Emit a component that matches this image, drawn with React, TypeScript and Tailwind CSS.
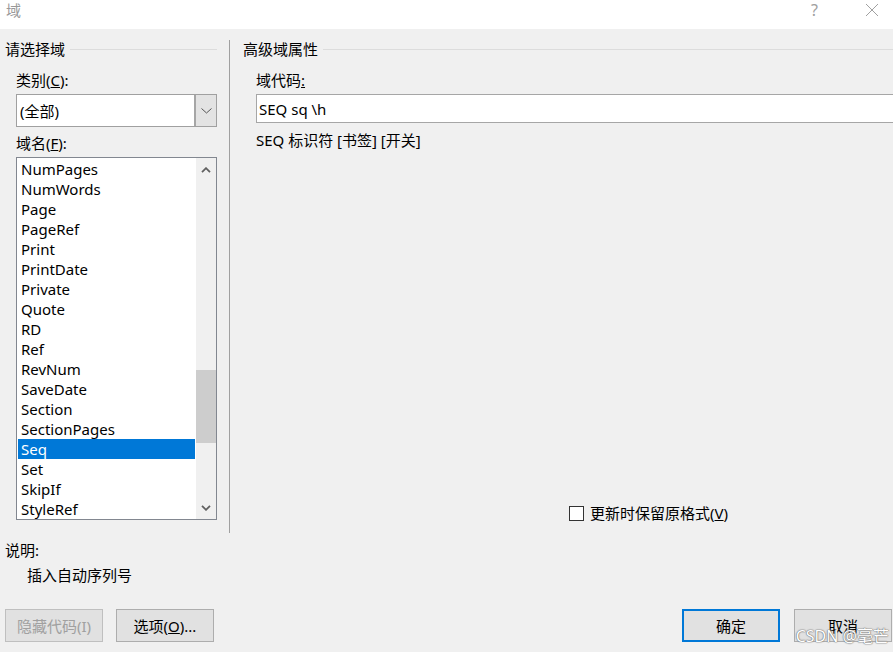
import type { JSX } from "react";

const FIELDS = [
  "NumPages",
  "NumWords",
  "Page",
  "PageRef",
  "Print",
  "PrintDate",
  "Private",
  "Quote",
  "RD",
  "Ref",
  "RevNum",
  "SaveDate",
  "Section",
  "SectionPages",
  "Seq",
  "Set",
  "SkipIf",
  "StyleRef",
];

function Chevron({ dir, className }: { dir: "up" | "down"; className?: string }): JSX.Element {
  return (
    <svg width="10" height="6" viewBox="0 0 10 6" className={className}>
      <path
        d={dir === "up" ? "M1 5.2 L5 1.2 L9 5.2" : "M1 0.8 L5 4.8 L9 0.8"}
        fill="none"
        stroke="#606060"
        strokeWidth="1.8"
      />
    </svg>
  );
}

function GroupHeader({ title }: { title: string }): JSX.Element {
  return (
    <div className="flex h-[20px] items-center">
      <span className="leading-[20px]">{title}</span>
      <div className="ml-[5px] h-px flex-1 bg-[#dcdcdc]" />
    </div>
  );
}

function Button({
  children,
  primary,
  disabled,
}: {
  children: React.ReactNode;
  primary?: boolean;
  disabled?: boolean;
}): JSX.Element {
  const border = primary
    ? "border-2 border-[#0078d7]"
    : disabled
      ? "border border-[#bfbfbf]"
      : "border border-[#adadad]";
  return (
    <div
      className={`flex h-[33px] w-[98px] items-center justify-center bg-[#e1e1e1] leading-[20px] ${border} ${
        disabled ? "text-[#a0a0a0]" : "text-black"
      }`}
    >
      {children}
    </div>
  );
}

export default function App(): JSX.Element {
  return (
    <div className="relative flex h-[652px] w-[893px] flex-col overflow-hidden bg-[#f0f0f0] font-['Noto_Sans','Noto_Sans_CJK_SC',sans-serif] text-[15px] text-black">
      {/* title bar */}
      <div className="flex h-[29px] shrink-0 items-start bg-white text-[#999999]">
        <span className="ml-[6px] leading-[20px]">域</span>
        <span className="ml-auto text-[16px] leading-[20px] text-[#a0a0a0]">?</span>
        <svg width="14" height="14" viewBox="0 0 14 14" className="ml-[47px] mr-[14px] mt-[3px]">
          <path d="M1 1 L13 13 M13 1 L1 13" stroke="#a0a0a0" strokeWidth="1" fill="none" />
        </svg>
      </div>

      {/* main area */}
      <div className="flex h-[504px] shrink-0">
        {/* left column */}
        <div className="flex w-[229px] shrink-0 flex-col pt-[10px]">
          <div className="ml-[5px] w-[212px]">
            <GroupHeader title="请选择域" />
          </div>
          <div className="ml-[16px] mt-[11px] leading-[20px]">
            类别(<span className="underline">C</span>):
          </div>
          <div className="ml-[16px] mt-[4px] flex h-[33px] w-[201px] border border-[#a0a0a0] bg-white">
            <div className="flex flex-1 items-center pl-[3px] leading-[20px]">(全部)</div>
            <div className="flex w-[22px] items-center justify-center border-l-2 border-[#a6a6a6] bg-[#e3e3e3]">
              <svg width="11" height="6" viewBox="0 0 11 6">
                <path d="M0.5 0.5 L5.5 5 L10.5 0.5" fill="none" stroke="#555555" strokeWidth="1" />
              </svg>
            </div>
          </div>
          <div className="ml-[16px] mt-[6px] leading-[20px]">
            域名(<span className="underline">F</span>):
          </div>
          <div className="ml-[16px] mt-[4px] flex h-[363px] w-[201px] border border-[#828790] bg-white">
            <div className="flex flex-1 flex-col overflow-hidden pl-px pt-px">
              {FIELDS.map((f) => (
                <div
                  key={f}
                  className={`h-[20px] shrink-0 pl-[3px] leading-[20px] ${
                    f === "Seq" ? "bg-[#0078d7] text-white" : ""
                  }`}
                >
                  {f}
                </div>
              ))}
            </div>
            <div className="ml-px flex w-[20px] flex-col bg-[#f0f0f0]">
              <div className="flex h-[20px] items-center justify-center pt-[3px]">
                <Chevron dir="up" />
              </div>
              <div className="flex-1">
                <div className="mt-[192px] h-[73px] bg-[#cdcdcd]" />
              </div>
              <div className="flex h-[20px] items-center justify-center pb-[3px]">
                <Chevron dir="down" />
              </div>
            </div>
          </div>
        </div>

        {/* separator */}
        <div className="mt-[11px] w-px shrink-0 bg-[#a0a0a0]" />

        {/* right column */}
        <div className="flex flex-1 flex-col pl-[13px] pt-[10px]">
          <GroupHeader title="高级域属性" />
          <div className="ml-[13px] mt-[11px] leading-[20px]">
            域代码<span className="underline">:</span>
          </div>
          <div className="ml-[13px] mt-[4px] flex h-[29px] items-center border border-r-0 border-[#a6a6a6] bg-white pl-[2px] leading-[20px]">
            SEQ sq \h
          </div>
          <div className="ml-[13px] mt-[7px] leading-[20px]">SEQ 标识符 [书签] [开关]</div>
          <div className="ml-[326px] mt-auto mb-[10px] flex h-[20px] items-center">
            <div className="h-[15px] w-[15px] border border-[#333333] bg-white" />
            <span className="ml-[6px] leading-[20px]">
              更新时保留原格式(<span className="underline">V</span>)
            </span>
          </div>
        </div>
      </div>

      {/* description */}
      <div className="ml-[5px] mt-[7px] leading-[20px]">说明:</div>
      <div className="ml-[27px] mt-[5px] leading-[20px]">插入自动序列号</div>

      {/* buttons */}
      <div className="mt-[24px] flex">
        <div className="ml-[5px] flex gap-[13px]">
          <Button disabled>隐藏代码(I)</Button>
          <Button>
            选项(<span className="underline">O</span>)...
          </Button>
        </div>
        <div className="ml-auto mr-px flex gap-[14px]">
          <Button primary>确定</Button>
          <Button>取消</Button>
        </div>
      </div>

      {/* watermark */}
      <div className="pointer-events-none absolute bottom-[6px] right-[4px] text-[16px] leading-[20px] text-white [text-shadow:0_0_1px_#6e6e6e,0_0_1px_#6e6e6e,0_0_2px_#9a9a9a]">
        CSDN @毫芒
      </div>
    </div>
  );
}
